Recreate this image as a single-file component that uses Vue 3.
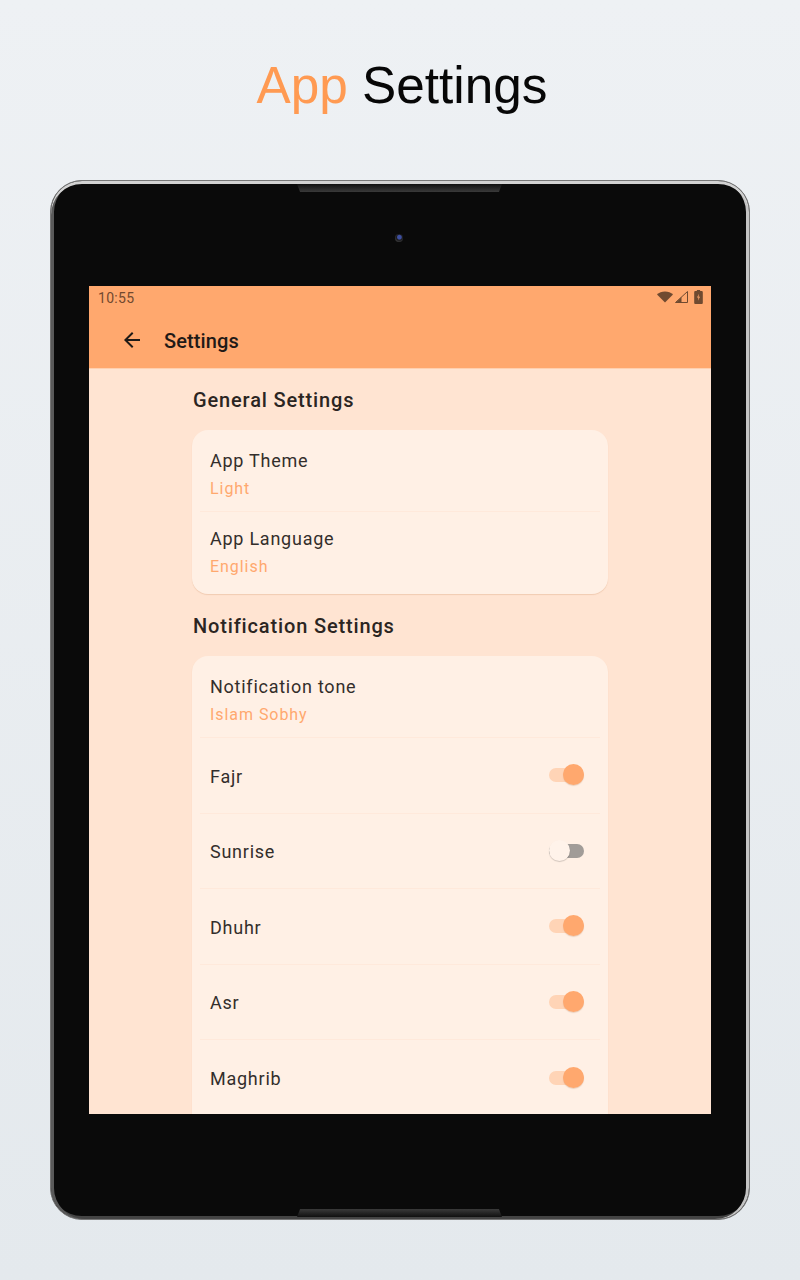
<script setup>
const toggles = [
  { name: 'Fajr', on: true },
  { name: 'Sunrise', on: false },
  { name: 'Dhuhr', on: true },
  { name: 'Asr', on: true },
  { name: 'Maghrib', on: true }
]
</script>

<template>
  <div class="page">
    <h1 class="headline"><span class="accent">App</span> Settings</h1>

    <div class="tablet">
      <div class="notch notch-top"></div>
      <div class="notch notch-bottom"></div>
      <div class="camera"></div>

      <div class="screen">
        <header class="app-bar">
          <div class="status-bar">
            <span class="clock">10:55</span>
            <div class="status-icons">
              <svg width="16" height="12" viewBox="0 0 16 12"><path d="M0 3.6C2 1.6 4.8.4 8 .4s6 1.2 8 3.2L8 11.6z" fill="#6f4a30"/></svg>
              <svg width="13" height="12" viewBox="0 0 13 12"><path d="M.5 11.5 12.5.5v11z" fill="none" stroke="#6f4a30" stroke-width="1"/><path d="M6.5 11.5V6L1 11.5z" fill="#6f4a30"/></svg>
              <svg class="battery" width="9" height="14" viewBox="0 0 8 13"><path d="M2.5 0h3v1H7a1 1 0 0 1 1 1v10a1 1 0 0 1-1 1H1a1 1 0 0 1-1-1V2a1 1 0 0 1 1-1h1.5z" fill="#6f4a30"/><path d="M4.5 3.5 2.6 7H4l-.5 3 1.900-3.700H4z" fill="#ffa86e"/></svg>
            </div>
          </div>
          <div class="toolbar">
            <svg class="back" width="24" height="24" viewBox="0 0 24 24"><path d="M20 11H7.830l5.590-5.590L12 4l-8 8 8 8 1.410-1.410L7.830 13H20z" fill="#1f1a17"/></svg>
            <span class="toolbar-title">Settings</span>
          </div>
        </header>

        <main class="content">
          <h2 class="section-title">General Settings</h2>
          <section class="card general">
            <div class="row stacked">
              <span class="row-label">App Theme</span>
              <span class="row-value">Light</span>
            </div>
            <div class="row stacked">
              <span class="row-label">App Language</span>
              <span class="row-value">English</span>
            </div>
          </section>

          <h2 class="section-title second">Notification Settings</h2>
          <section class="card tall">
            <div class="row stacked">
              <span class="row-label">Notification tone</span>
              <span class="row-value">Islam Sobhy</span>
            </div>
            <div v-for="item in toggles" :key="item.name" class="row toggle-row">
              <span class="row-label">{{ item.name }}</span>
              <span class="switch" :class="{ on: item.on }"><span class="thumb"></span></span>
            </div>
          </section>
        </main>
      </div>
    </div>
  </div>
</template>

<style>
html,
body {
  margin: 0;
  background: #e8edf0;
}
</style>

<style scoped>
.page {
  box-sizing: border-box;
  width: 800px;
  height: 1280px;
  overflow: hidden;
  padding: 180px 50px 0;
  position: relative;
  background: linear-gradient(180deg, #eef1f4 0%, #e4e9ed 100%);
  font-family: Roboto, sans-serif;
}

.headline {
  position: absolute;
  top: 56px;
  left: 0;
  width: 100%;
  margin: 0;
  padding-left: 4px;
  box-sizing: border-box;
  text-align: center;
  font-family: "Liberation Sans", Arial, sans-serif;
  font-size: 51.3px;
  line-height: 60px;
  font-weight: 400;
  color: #070707;
}

.accent {
  color: #ff9a52;
}

.tablet {
  box-sizing: border-box;
  position: relative;
  width: 700px;
  height: 1040px;
  padding: 105px 38px;
  background: #0a0a0a;
  border-radius: 32px;
  border: 1px solid #777;
  box-shadow:
    inset 0 3px 0 #d2d2d2,
    inset -3px 0 0 #c4c4c4,
    inset 3px 0 0 #5a5a5a,
    inset 0 -3px 0 #444;
}

.notch {
  position: absolute;
  left: 246px;
  width: 205px;
  height: 8px;
}

.notch-top {
  top: 3px;
  clip-path: polygon(0 0, 100% 0, 98.5% 100%, 1.5% 100%);
  background: linear-gradient(180deg, #101010 0%, #3a3a3a 100%);
}

.notch-bottom {
  bottom: 2px;
  clip-path: polygon(1.5% 0, 98.5% 0, 100% 100%, 0 100%);
  background: linear-gradient(0deg, #101010 0%, #3a3a3a 100%);
}

.camera {
  position: absolute;
  top: 53px;
  left: 344px;
  width: 8px;
  height: 8px;
  border-radius: 50%;
  background: radial-gradient(circle at 55% 40%, #3d4fa0 0 28%, #1a1a1e 45%, #4a4a4a 90%);
}

.screen {
  width: 622px;
  height: 828px;
  overflow: hidden;
  background: #ffe4d2;
}

.app-bar {
  height: 83px;
  background: #ffa86e;
  border-bottom: 1px solid #ffd0b0;
  box-sizing: border-box;
}

.status-bar {
  display: flex;
  justify-content: space-between;
  align-items: center;
  height: 23px;
  padding: 0 8px 0 9px;
}

.clock {
  font-size: 14px;
  letter-spacing: 0.3px;
  color: #72492e;
}

.status-icons {
  display: flex;
  align-items: center;
  gap: 2px;
  margin-top: -2px;
}

.battery {
  margin-left: 4px;
}

.toolbar {
  box-sizing: border-box;
  display: flex;
  align-items: center;
  height: 59px;
  padding: 3px 0 0 31px;
}

.toolbar-title {
  margin-left: 20px;
  margin-top: 2px;
  font-size: 20px;
  font-weight: 500;
  letter-spacing: 0.1px;
  color: #1f1a17;
}

.content {
  width: 416px;
  margin: 0 auto;
}

.section-title {
  margin: 0;
  padding: 19px 0 0 1px;
  height: 61px;
  box-sizing: border-box;
  font-size: 20px;
  line-height: 24px;
  font-weight: 500;
  letter-spacing: 0.85px;
  color: #2b2522;
}

.second {
  padding-top: 20px;
  height: 62px;
}

.card {
  padding: 0 8px;
  background: #fff0e5;
  border-radius: 16px;
  box-shadow: 0 1px 1px rgba(190, 120, 70, 0.22);
}

.general {
  height: 164px;
  box-sizing: border-box;
}

.tall {
  padding-bottom: 24px;
}

.row {
  box-sizing: border-box;
  padding: 0 9px 0 10px;
  border-bottom: 1px solid #ffe9db;
  display: flex;
}

.row:last-child {
  border-bottom: none;
}

.stacked {
  flex-direction: column;
  height: 82px;
  padding-top: 19px;
}

.general .stacked + .stacked {
  height: 78px;
  padding-top: 15px;
}

.toggle-row {
  height: 75.5px;
  align-items: center;
  justify-content: space-between;
  padding-right: 16px;
}

.toggle-row .row-label {
  padding-top: 3px;
}

.row-label {
  font-size: 18px;
  line-height: 24px;
  letter-spacing: 0.75px;
  color: #332e2b;
}

.row-value {
  margin-top: 4px;
  font-size: 16px;
  line-height: 24px;
  letter-spacing: 0.95px;
  color: #ffa86e;
}

.switch {
  position: relative;
  display: block;
  width: 35px;
  height: 14px;
  border-radius: 7px;
  background: #a19c98;
}

.switch.on {
  background: #ffd4b6;
}

.thumb {
  position: absolute;
  top: -4px;
  left: 0;
  width: 21px;
  height: 21px;
  border-radius: 50%;
  background: #fff3ea;
  box-shadow: 0 1px 1px rgba(0, 0, 0, 0.18);
}

.switch.on .thumb {
  left: 14px;
  background: #ffa86e;
  box-shadow: 0 1px 1px rgba(150, 80, 30, 0.2);
}
</style>
